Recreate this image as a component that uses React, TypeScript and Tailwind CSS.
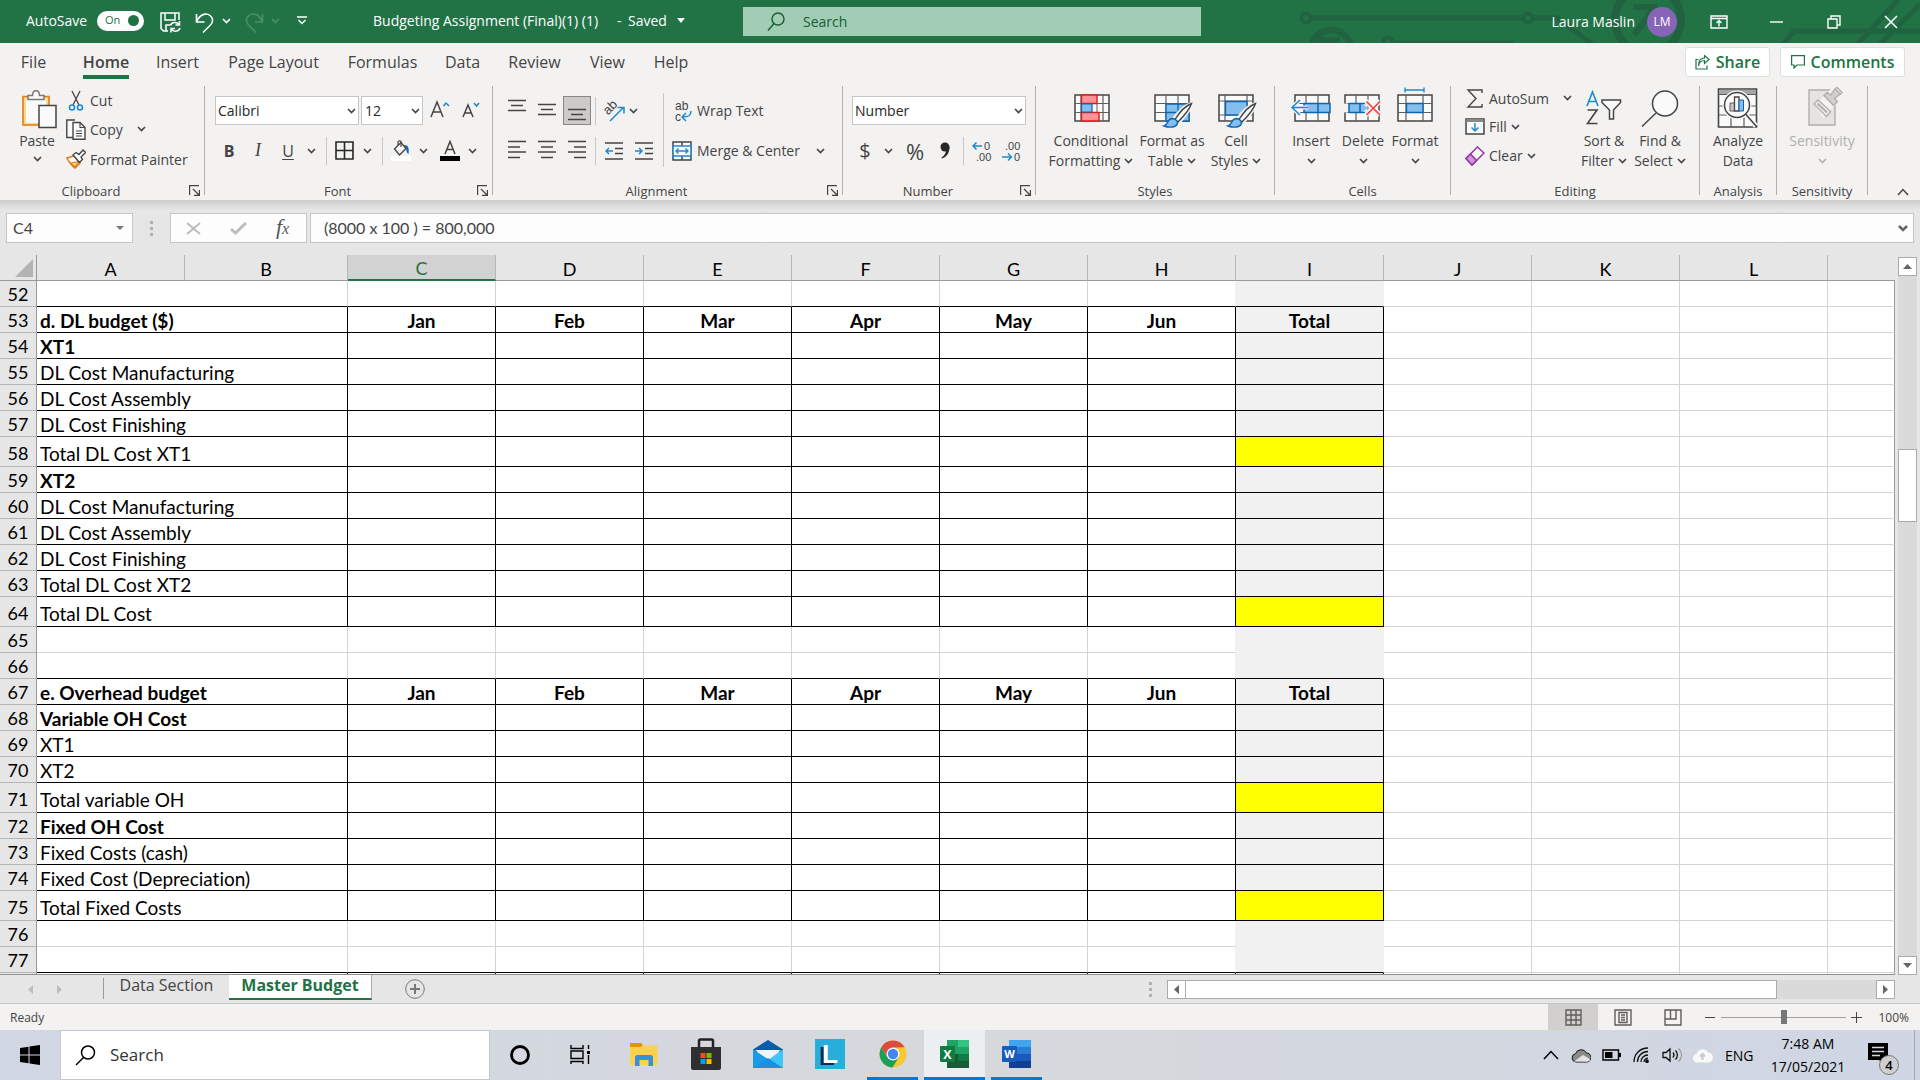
import React from "react";

type Kids = { children?: React.ReactNode };

const INK = "#444444";
const BLUE = "#1e8bcd";

function Chevron({ color = INK, className = "" }: { color?: string; className?: string }) {
  return (
    <svg width="9" height="6" viewBox="0 0 9 6" fill="none" stroke={color} strokeWidth="1.6" className={"shrink-0 " + className}>
      <path d="M1 1l3.5 3.5L8 1" />
    </svg>
  );
}

function Slot({ w, label, children }: Kids & { w: string; label: string }) {
  return (
    <button aria-label={label} className={"flex h-[29px] shrink-0 items-center justify-center " + w}>
      {children}
    </button>
  );
}

function Rule({ w }: { w: string }) {
  return (
    <div className={"flex h-[29px] shrink-0 items-center justify-center " + w}>
      <div className="h-7 w-px bg-[#c8c6c4]" />
    </div>
  );
}

function Group({ name, w, launcher, children }: Kids & { name: string; w: string; launcher?: boolean }) {
  return (
    <>
      <section aria-label={name} className={"flex h-[114px] shrink-0 flex-col " + w}>
        <div className="flex h-[94px] shrink-0">{children}</div>
        <div className="flex h-5 items-center pt-px">
          <span className="flex-1 text-center text-[13px] leading-5">{name}</span>
          {launcher && (
            <button aria-label={name + " settings"} className="flex w-[22px] shrink-0 justify-end pr-1">
              <svg width="11" height="11" viewBox="0 0 11 11" fill="none" stroke={INK} strokeWidth="1.2">
                <path d="M.6 10V.6H10M4 4l6 6M10.4 5v5.4H5" />
              </svg>
            </button>
          )}
        </div>
      </section>
      <div className="h-[109px] w-px shrink-0 bg-[#b3b0ad]" />
    </>
  );
}

function Big({ w, l1, l2, icon, muted }: { w: string; l1: string; l2?: React.ReactNode; icon: React.ReactNode; muted?: boolean }) {
  return (
    <button className={"flex shrink-0 flex-col items-center text-[14px] leading-5 " + w + (muted ? " text-[#b1afad]" : "")}>
      <span className="flex h-[45px] items-start">{icon}</span>
      <span className="whitespace-nowrap">{l1}</span>
      <span className="flex h-5 items-center gap-1 whitespace-nowrap">{l2}</span>
    </button>
  );
}

function Lines({ rows }: { rows: [number, number, number][] }) {
  return (
    <svg width="18" height="29" viewBox="0 0 18 29" stroke={INK} strokeWidth="1.5">
      {rows.map(([a, b, y]) => (
        <path key={y} d={`M${a} ${y}H${b}`} />
      ))}
    </svg>
  );
}

/* ---------- ribbon drawings ---------- */

const PasteIcon = () => (
  <svg width="36" height="44" viewBox="0 0 36 44" fill="none">
    <path d="M2 10.5h26V39H2z" fill="#f9d98f" stroke="#e07b18" strokeWidth="1.6" />
    <path d="M5 13h20v24H5z" fill="#fafafa" />
    <path d="M7 13.5V9.500h4.500c0-6.500 7-6.500 7 0H23v4z" fill="#fafafa" stroke="#7a7876" strokeWidth="1.5" />
    <path d="M18 19.500h17v22H18z" fill="#fafafa" stroke={INK} strokeWidth="1.5" />
  </svg>
);

const GridBase = ({ cols = [12, 24] }: { cols?: number[] }) => (
  <>
    <path d="M1 9h34v26H1z" fill="#fafafa" stroke={INK} strokeWidth="1.5" />
    <path d="M1 17.500h34M1 26.500h34" stroke="#605e5c" strokeWidth="1.2" />
    {cols.map((c) => (
      <path key={c} d={`M${c} 9v26`} stroke="#605e5c" strokeWidth="1.2" />
    ))}
  </>
);

const Brush = () => (
  <>
    <path d="M37 18c-8 3-13 9-17 15l4 4c5-6 11-11 13-19z" fill="#fafafa" stroke="#f3f2f1" strokeWidth="4" />
    <path d="M37.500 17.500C31 20 25 27 21 33.500l3 2.500c5-5 11-11 13.500-18.500z" fill="#fafafa" stroke={INK} strokeWidth="1.4" />
    <path d="M10 40c4-1 3-7 8-7.500 4 0 6.500 3.500 5 6-2.500 3.500-9 3-13 1.500z" fill="#83beec" stroke="#0f64b0" strokeWidth="1.4" />
  </>
);

const ConditionalIcon = () => (
  <svg width="36" height="44" viewBox="0 0 36 44" fill="none" className="ml-[2px]">
    <GridBase cols={[7, 29]} />
    <path d="M23 17v9" stroke="#605e5c" />
    <path d="M7.500 9H23v8.500H7.500zM7.500 26.500H25V35H7.500z" fill="#ff9295" stroke="#d8201c" strokeWidth="1.4" />
    <path d="M7.500 18H18v8H7.500z" fill="#83beec" stroke="#0f64b0" strokeWidth="1.2" />
  </svg>
);

const TableIcon = () => (
  <svg width="40" height="44" viewBox="0 0 40 44" fill="none" className="ml-1">
    <GridBase />
    <path d="M12 18h23v17H12z" fill="#83beec" stroke="#0f64b0" strokeWidth="1.3" />
    <path d="M12 26.500h23M24 18v17" stroke="#0f64b0" strokeWidth="1.3" />
    <Brush />
  </svg>
);

const StylesIcon = () => (
  <svg width="40" height="44" viewBox="0 0 40 44" fill="none" className="ml-1">
    <path d="M1 9h34v26H1z" fill="#fafafa" stroke={INK} strokeWidth="1.500" />
    <path d="M1 15h34M1 29h34M7 9v26M29 9v26" stroke="#605e5c" strokeWidth="1.2" />
    <path d="M7.500 15.500H29V29H7.500z" fill="#83beec" stroke="#0f64b0" strokeWidth="1.3" />
    <Brush />
  </svg>
);

const InsertIcon = () => (
  <svg width="42" height="44" viewBox="0 0 42 44" fill="none">
    <g transform="translate(4)"><GridBase /></g>
    <path d="M14 17.500h26v9H14z" fill="#83beec" stroke="#0f64b0" strokeWidth="1.5" />
    <path d="M28 17.500v9" stroke="#0f64b0" strokeWidth="1.5" />
    <path d="M18 21.500H2M10 14l-8 7.500 8 7.500" stroke="#f3f2f1" strokeWidth="4" />
    <path d="M18 21.500H2M10 14l-8 7.500 8 7.500" stroke={BLUE} strokeWidth="1.5" />
  </svg>
);

const DeleteIcon = () => (
  <svg width="40" height="44" viewBox="0 0 40 44" fill="none">
    <g transform="translate(1)"><GridBase /></g>
    <path d="M0 17.500h7v9H0z" fill="#f3f2f1" />
    <path d="M6 17.500h13l6 4.500-6 4.500H6z" fill="#83beec" />
    <path d="M24 26.500H6v-9h18M17 17.500v9" stroke="#0f64b0" strokeWidth="1.5" />
    <path d="M23 15l14 14M37 15L23 29" stroke="#f3f2f1" strokeWidth="5" />
    <path d="M26 17h8v10h-8z" fill="#f3f2f1" />
    <path d="M23.500 15.500l13.500 13.500M37 15.500L23.500 29" stroke="#f2403b" strokeWidth="1.6" />
  </svg>
);

const FormatIcon = () => (
  <svg width="38" height="44" viewBox="0 0 38 44" fill="none">
    <g transform="translate(1)"><GridBase cols={[9, 26]} /></g>
    <path d="M10.500 17.500H27v9H10.500z" fill="#83beec" stroke="#0f64b0" strokeWidth="1.4" />
    <path d="M9 4h19M9 1.500v5M28 1.500v5" stroke={BLUE} strokeWidth="1.4" />
  </svg>
);

const SortIcon = () => (
  <svg width="36" height="44" viewBox="0 0 36 44" fill="none">
    <path d="M1 20L6.500 6 12 20M3 15.500h7" stroke={BLUE} strokeWidth="1.6" />
    <path d="M1.500 24H11L1.500 37.500h10" stroke={INK} strokeWidth="1.6" />
    <path d="M16 14h18.500v2.500L27.500 24v9h-4v-9L16 16.500z" fill="#fafafa" stroke={INK} strokeWidth="1.5" />
  </svg>
);

const FindIcon = () => (
  <svg width="38" height="44" viewBox="0 0 38 44" fill="none" stroke={INK} strokeWidth="1.5">
    <circle cx="24" cy="17.500" r="12.500" fill="#fafafa" />
    <path d="M15 27L1 40.500" />
  </svg>
);

const AnalyzeIcon = () => (
  <svg width="42" height="44" viewBox="0 0 42 44" fill="none">
    <path d="M1.500 3h38v38h-38z" fill="#fafafa" stroke={INK} strokeWidth="1.6" />
    <path d="M2 4h37v4H2z" fill="#a8a6a4" />
    <path d="M1.500 8.500h38M1.500 20h38M1.500 29h38M14 29v12M27 29v12" stroke="#605e5c" strokeWidth="1.2" />
    <path d="M28 28l11 12" stroke="#fafafa" strokeWidth="5" />
    <circle cx="20" cy="19" r="14.500" fill="#fafafa" />
    <circle cx="20" cy="19" r="12.500" fill="#fafafa" stroke={INK} strokeWidth="1.5" />
    <path d="M28.500 28l11 12.500" stroke={INK} strokeWidth="1.5" />
    <path d="M13 17h4.500v8H13z" fill="#c8c6c4" stroke="#605e5c" />
    <path d="M17.500 11H22v14h-4.500z" fill="#fafafa" stroke={INK} strokeWidth="1.3" />
    <path d="M22 14h4.500v11H22z" fill="#83beec" stroke="#0f64b0" />
  </svg>
);

const SensitivityIcon = () => (
  <svg width="36" height="44" viewBox="0 0 36 44" fill="none" stroke="#b1afad" strokeWidth="1.400" className="ml-[6px]">
    <path d="M2 4h26v35H2z" fill="#e6e4e2" />
    <path d="M8 19L26 1l10 10-20 21z" fill="#f3f2f1" stroke="none" />
    <path d="M7 18l4-4 12.500 11.500-4 5z" fill="#f3f2f1" />
    <path d="M10.500 17.500L20 26.500" strokeWidth="2.200" />
    <path d="M17 9.500l3.500-3 3 2.500L28 3l5.500 5-6 4.500 3 3-4 4z" fill="#d2d0ce" />
    <path d="M28 3l2-1.500 5 5L33.500 8" />
  </svg>
);

/* ---------- title bar ---------- */

function TitleBar() {
  return (
    <header className="relative flex h-[43px] shrink-0 items-center overflow-hidden bg-[#217346] text-[14px] text-white">
      <svg className="absolute right-0 top-0" width="620" height="43" viewBox="1300 0 620 43" fill="none" stroke="#216340" strokeWidth="5" aria-hidden="true">
        <circle cx="1306" cy="18" r="4.500" strokeWidth="4" />
        <path d="M1311 18h212M1533 18h24l38 28" />
        <circle cx="1528" cy="18" r="4.500" strokeWidth="4" />
        <circle cx="1331" cy="50" r="20" strokeWidth="7" />
        <path d="M1318 41h22" strokeWidth="7" />
        <circle cx="1388" cy="42" r="4.500" strokeWidth="4" />
        <path d="M1393 43h120" />
        <circle cx="1648" cy="20" r="33" strokeWidth="8" />
        <path d="M1633 7h22v22M1655 7l-21 28" strokeWidth="6" />
        <path d="M1782 46l12-15h126M1856 46l42-46M1878 46l42-42" />
      </svg>
      <div className="relative flex w-[743px] shrink-0 items-center pb-[2px]">
        <label className="ml-[26px] flex items-center gap-2">
          <span className="w-[63px] whitespace-nowrap">AutoSave</span>
          <input type="checkbox" defaultChecked className="sr-only" />
          <span className="flex h-5 w-[47px] items-center justify-between rounded-full bg-white pl-2 pr-[5px] text-[11px] text-[#217346]">
            On<span className="size-[11px] rounded-full bg-[#217346]" />
          </span>
        </label>
        <button aria-label="Save" className="ml-4 pt-1">
          <svg width="21" height="21" viewBox="0 0 21 21" fill="none" stroke="white" strokeWidth="1.500">
            <path d="M8 19H3.500L1 16.500V1h18v7M5 1v7h10V1M6 19v-6h4" />
            <path d="M10.500 13.500c1-3.500 6.500-4 8.500-1M19.500 9v4h-4M20 16c-1 3.500-6.500 4.500-8.500 1M11 20.500v-4h4" />
          </svg>
        </button>
        <button aria-label="Undo" className="ml-[14px] pt-1">
          <svg width="20" height="22" viewBox="0 0 20 22" fill="none" stroke="white" strokeWidth="1.600">
            <path d="M1.500 2v8h8M1.500 9.500C6 1 12 1 15 3.500c3.500 3 3.500 6.500 0 10L8 20.500" />
          </svg>
        </button>
        <Chevron color="white" className="ml-[7px]" />
        <button aria-label="Redo" className="ml-[13px] pt-1">
          <svg width="20" height="22" viewBox="0 0 20 22" fill="none" stroke="#4c9069" strokeWidth="1.600">
            <path d="M18.500 2v8h-8M18.500 9.500C14 1 8 1 5 3.500c-3.500 3-3.500 6.500 0 10l7 7" />
          </svg>
        </button>
        <Chevron color="#4c9069" className="ml-[7px]" />
        <button aria-label="Customize toolbar" className="ml-[17px]">
          <svg width="10" height="9" viewBox="0 0 10 9" fill="none" stroke="white" strokeWidth="1.400">
            <path d="M0 1h10M1.500 4L5 7.500 8.500 4" />
          </svg>
        </button>
        <button className="ml-[66px] flex items-center whitespace-nowrap">
          <span className="w-[244px] text-left">Budgeting Assignment (Final)(1) (1)</span>
          <span className="w-[11px] text-left">-</span>
          <span className="w-[49px] text-left">Saved</span>
          <svg width="8" height="5" viewBox="0 0 8 5" fill="white"><path d="M0 0h8L4 5z" /></svg>
        </button>
      </div>
      <label className="relative flex h-[29px] w-[458px] shrink-0 items-center bg-[#a0cdb4] pl-6 text-[#185c37]">
        <svg width="18" height="20" viewBox="0 0 18 20" fill="none" stroke="#185c37" strokeWidth="1.400">
          <circle cx="11" cy="7" r="6" /><path d="M7 11.500L1 18.500" />
        </svg>
        <input aria-label="Search" placeholder="Search" className="ml-[18px] min-w-0 flex-1 bg-transparent outline-none placeholder:text-[#185c37]" />
      </label>
      <div className="relative flex flex-1 items-center justify-end">
        <span>Laura Maslin</span>
        <span className="ml-3 flex size-[30px] items-center justify-center rounded-full bg-[#8764b8] text-[12px]">LM</span>
        <button aria-label="Ribbon display options" className="ml-[33px]">
          <svg width="18" height="14" viewBox="0 0 18 14" fill="none" stroke="white" strokeWidth="1.400">
            <path d="M1 1h16v12H1zM1 3.500h16M9 11.500V6M6.500 8L9 5.500 11.500 8" />
          </svg>
        </button>
        <button aria-label="Minimize" className="ml-[42px]">
          <svg width="13" height="14" viewBox="0 0 13 14" stroke="white" strokeWidth="1.400"><path d="M0 7h13" /></svg>
        </button>
        <button aria-label="Restore" className="ml-11">
          <svg width="14" height="14" viewBox="0 0 14 14" fill="none" stroke="white" strokeWidth="1.400">
            <path d="M1 4h9v9H1zM4 4V1h9v9h-3" />
          </svg>
        </button>
        <button aria-label="Close" className="ml-[43px] mr-[22px]">
          <svg width="14" height="14" viewBox="0 0 14 14" stroke="white" strokeWidth="1.500"><path d="M1 1l12 12M13 1L1 13" /></svg>
        </button>
      </div>
    </header>
  );
}

const TABS: [string, string][] = [
  ["File", "w-[61px] mr-[6px]"],
  ["Home", "w-[72px]"],
  ["Insert", "w-[71px]"],
  ["Page Layout", "w-[121px]"],
  ["Formulas", "w-[97px]"],
  ["Data", "w-[63px]"],
  ["Review", "w-[81px]"],
  ["View", "w-[65px]"],
  ["Help", "w-[62px]"],
];

function TabRow() {
  return (
    <nav className="flex h-[43px] shrink-0 items-start pl-[3px] text-[16px]">
      {TABS.map(([t, w]) => (
        <button key={t} className={"flex shrink-0 flex-col items-center whitespace-nowrap pt-[7px] leading-6 " + w}>
          {t === "Home" ? <span className="border-b-4 border-[#217346] pb-px font-semibold">{t}</span> : <span>{t}</span>}
        </button>
      ))}
      <div className="mt-1 flex flex-1 justify-end gap-[10px] pr-[15px] font-semibold text-[#217346]">
        <button className="flex h-[30px] w-[85px] items-center justify-center gap-[6px] rounded-[3px] border border-[#e1dfdd] bg-white">
          <svg width="15" height="15" viewBox="0 0 15 15" fill="none" stroke="#217346" strokeWidth="1.200">
            <path d="M3.500 4.500H1v9.500h11v-3.500M3.500 11C4 7 6.500 5.500 9.500 5.500V8.500l4.500-4-4.500-4v2.500C5.500 3 3.500 6 3.500 11z" />
          </svg>
          Share
        </button>
        <button className="flex h-[30px] w-[125px] items-center justify-center gap-[6px] rounded-[3px] border border-[#e1dfdd] bg-white">
          <svg width="14" height="14" viewBox="0 0 14 14" fill="none" stroke="#217346" strokeWidth="1.200">
            <path d="M.6.600h12.800v9.400H6l-3 3v-3H.600z" />
          </svg>
          Comments
        </button>
      </div>
    </nav>
  );
}

/* ---------- ribbon ---------- */

function Ribbon() {
  return (
    <div className="flex shrink-0">
      <Group name="Clipboard" w="w-[204px]" launcher>
        <button className="ml-[14px] flex w-[46px] shrink-0 flex-col items-center text-[14px] leading-5">
          <span className="flex h-[45px] pl-1"><PasteIcon /></span>
          <span>Paste</span>
          <Chevron className="mt-[5px]" />
        </button>
        <div className="ml-[6px] flex flex-col text-[14px]">
          <button className="flex h-[28px] items-center gap-1">
            <svg width="20" height="21" viewBox="0 0 20 21" fill="none">
              <path d="M6 1l7 14M14 1L7 15" stroke={INK} strokeWidth="1.300" />
              <circle cx="6" cy="17.500" r="2.500" stroke={BLUE} strokeWidth="1.600" />
              <circle cx="14" cy="17.500" r="2.500" stroke={BLUE} strokeWidth="1.600" />
            </svg>
            Cut
          </button>
          <button className="flex h-[30px] items-center gap-1">
            <svg width="20" height="21" viewBox="0 0 20 21" fill="none" stroke={INK} strokeWidth="1.400">
              <path d="M7 18.500H.800V1H9M7 3.500h7l5 5v11.700H7z" fill="#fafafa" />
              <path d="M14 3.500v5h5M10 12h6M10 14.500h6M10 17h6" strokeWidth="1.100" />
            </svg>
            Copy
            <Chevron className="ml-[10px]" />
          </button>
          <button className="flex h-[30px] items-center gap-1 whitespace-nowrap">
            <svg width="20" height="20" viewBox="0 0 20 20" fill="none">
              <path d="M1 9l7-2 6 7-5 5C6 17 3 13 1 9z" fill="#fff" stroke="#e07b18" strokeWidth="1.600" />
              <path d="M4.500 14l8-1.500L9 18z" fill="#f9d98f" stroke="#e07b18" strokeWidth="1.200" />
              <path d="M7 6l3-2.500 3 2L17 1l2.500 2.500L15 8l1.500 2.500-3 3z" fill="#fafafa" stroke={INK} strokeWidth="1.400" />
            </svg>
            Format Painter
          </button>
        </div>
      </Group>

      <Group name="Font" w="w-[287px]" launcher>
        <div className="ml-[10px] flex flex-col gap-[11px] pt-[10px]">
          <div className="flex">
            <div className="relative mr-[2px] w-[144px]">
              <select aria-label="Font name" className="h-[29px] w-full appearance-none border border-[#c8c6c4] bg-white px-[2px] text-[14px] text-[#262626]">
                <option>Calibri</option>
              </select>
              <Chevron className="pointer-events-none absolute right-[3px] top-3" />
            </div>
            <div className="relative w-[62px]">
              <select aria-label="Font size" className="h-[29px] w-full appearance-none border border-[#c8c6c4] bg-white px-[3px] text-[14px] text-[#262626]">
                <option>12</option>
              </select>
              <Chevron className="pointer-events-none absolute right-[3px] top-3" />
            </div>
            <Slot w="w-[34px]" label="Increase font size">
              <svg width="20" height="22" viewBox="0 0 20 22" fill="none" stroke={INK} strokeWidth="1.500">
                <path d="M1 17L7 2l6 15M3 12h8" /><path d="M13.500 6L16 3l3 3" stroke={BLUE} />
              </svg>
            </Slot>
            <Slot w="w-[28px]" label="Decrease font size">
              <svg width="18" height="22" viewBox="0 0 18 22" fill="none" stroke={INK} strokeWidth="1.500">
                <path d="M1 17L6 5l5 12M3 13h6" /><path d="M12 3l2.500 3L17 3" stroke={BLUE} />
              </svg>
            </Slot>
          </div>
          <div className="flex text-[16px]">
            <Slot w="w-[28px]" label="Bold"><span className="font-bold">B</span></Slot>
            <Slot w="w-[30px]" label="Italic"><span className="font-['Liberation_Serif'] text-[18px] italic">I</span></Slot>
            <Slot w="w-[30px]" label="Underline"><span className="underline underline-offset-2">U</span></Slot>
            <Slot w="w-[16px]" label="Underline options"><Chevron /></Slot>
            <Rule w="w-[14px]" />
            <Slot w="w-[22px]" label="Borders">
              <svg width="19" height="19" viewBox="0 0 19 19" fill="none" stroke="#262626" strokeWidth="1.600"><path d="M1 1h17v17H1zM9.500 1v17M1 9.500h17" /></svg>
            </Slot>
            <Slot w="w-[24px]" label="Border options"><Chevron /></Slot>
            <Rule w="w-[6px]" />
            <Slot w="w-[32px]" label="Fill colour">
              <svg width="20" height="21" viewBox="0 0 20 21" fill="none">
                <path d="M3.500 9L10 2.500l5 6L8.500 15z" fill="#fafafa" stroke={INK} strokeWidth="1.400" />
                <path d="M10 7V1.500C10 .5 7 .5 7 2v3" stroke={INK} strokeWidth="1.200" />
                <path d="M13 5c4-.5 5.500 3 4.500 9-2-1-2-4-2.500-6z" fill="#0f64b0" />
                <path d="M0 16h20v5H0z" fill="#fff" />
              </svg>
            </Slot>
            <Slot w="w-[12px]" label="Fill options"><Chevron /></Slot>
            <Slot w="w-[34px] ml-1" label="Font colour">
              <svg width="20" height="21" viewBox="0 0 20 21" fill="none">
                <path d="M5 14l5-12.500L15 14M7 9.500h6" stroke={INK} strokeWidth="1.500" /><path d="M0 16h20v5H0z" fill="#000" />
              </svg>
            </Slot>
            <Slot w="w-[10px]" label="Font colour options"><Chevron /></Slot>
          </div>
        </div>
      </Group>

      <Group name="Alignment" w="w-[349px]" launcher>
        <div className="flex w-[170px] shrink-0 flex-col gap-[11px] pl-[9px] pt-[10px]">
          <div className="flex">
            <Slot w="w-[30px]" label="Top align"><Lines rows={[[0, 18, 4.5], [3, 15, 9.5], [0, 18, 14.5]]} /></Slot>
            <Slot w="w-[30px]" label="Middle align"><Lines rows={[[0, 18, 8.5], [3, 15, 13.5], [0, 18, 18.5]]} /></Slot>
            <Slot w="w-[28px] ml-px border border-[#8a8886] bg-[#cdcbc9]" label="Bottom align"><Lines rows={[[0, 18, 13.5], [3, 15, 18.5], [0, 18, 23.5]]} /></Slot>
            <Rule w="w-[8px]" />
            <Slot w="w-[30px]" label="Orientation">
              <svg width="28" height="28" viewBox="0 0 28 28" fill="none">
                <text x="7" y="18" fontSize="13" fontFamily="Liberation Sans" fill={INK} transform="rotate(-45 8 17)">ab</text>
                <path d="M10 24L23 11M17.500 10.500H24v6" stroke={BLUE} strokeWidth="1.500" />
              </svg>
            </Slot>
            <Slot w="w-[9px]" label="Orientation options"><Chevron /></Slot>
          </div>
          <div className="flex">
            <Slot w="w-[30px]" label="Align left"><Lines rows={[[0, 18, 5.5], [0, 12, 11], [0, 18, 16], [0, 12, 21.5]]} /></Slot>
            <Slot w="w-[30px]" label="Centre"><Lines rows={[[0, 18, 5.5], [3, 15, 11], [0, 18, 16], [3, 15, 21.5]]} /></Slot>
            <Slot w="w-[30px]" label="Align right"><Lines rows={[[0, 18, 5.5], [6, 18, 11], [0, 18, 16], [6, 18, 21.5]]} /></Slot>
            <Rule w="w-[6px]" />
            <Slot w="w-[32px]" label="Decrease indent">
              <svg width="18" height="18" viewBox="0 0 18 18" fill="none" stroke={INK} strokeWidth="1.500">
                <path d="M0 1h18M10 6.500h8M10 11.500h8M0 17h18" /><path d="M8 9H1M4 6L1 9l3 3" stroke={BLUE} />
              </svg>
            </Slot>
            <Slot w="w-[28px]" label="Increase indent">
              <svg width="18" height="18" viewBox="0 0 18 18" fill="none" stroke={INK} strokeWidth="1.500">
                <path d="M0 1h18M10 6.500h8M10 11.500h8M0 17h18" /><path d="M0 9h7M4 6l3 3-3 3" stroke={BLUE} />
              </svg>
            </Slot>
          </div>
        </div>
        <div className="mt-[7px] h-[74px] w-px shrink-0 bg-[#c8c6c4]" />
        <div className="flex flex-col gap-[11px] pl-2 pt-[10px] text-[14px]">
          <button className="flex h-[29px] items-center gap-[5px] whitespace-nowrap">
            <svg width="20" height="26" viewBox="0 0 20 26" fill="none">
              <text x="3" y="12" fontSize="12" fontFamily="Liberation Sans" fill={INK}>ab</text>
              <text x="3" y="23" fontSize="12" fontFamily="Liberation Sans" fill={INK} className="leading-none">c</text>
              <path d="M19 13c0 5-3 6-8 6M14 15l-4 4 4 4" stroke={BLUE} strokeWidth="1.500" />
            </svg>
            Wrap Text
          </button>
          <button className="flex h-[29px] items-center gap-[5px] whitespace-nowrap">
            <svg width="20" height="20" viewBox="0 0 20 20" fill="none">
              <path d="M1 1h18v18H1zM10 1v18" fill="#fafafa" stroke={INK} strokeWidth="1.500" />
              <path d="M1 5h18v10H1z" fill="#fafafa" stroke={BLUE} strokeWidth="1.600" />
              <path d="M4 10h12M6.500 7.500L4 10l2.500 2.500M13.500 7.500L16 10l-2.500 2.500" stroke={BLUE} strokeWidth="1.400" />
            </svg>
            <span className="w-[114px] text-left">Merge &amp; Center</span>
            <Chevron />
          </button>
        </div>
      </Group>

      <Group name="Number" w="w-[192px]" launcher>
        <div className="ml-[9px] flex flex-col gap-[11px] pt-[10px]">
          <div className="relative w-[174px]">
            <select aria-label="Number format" className="h-[29px] w-full appearance-none border border-[#c8c6c4] bg-white px-[2px] text-[14px] text-[#262626]">
              <option>Number</option>
            </select>
            <Chevron className="pointer-events-none absolute right-[3px] top-3" />
          </div>
          <div className="flex">
            <Slot w="w-[26px]" label="Accounting format"><span className="text-[20px] leading-5">$</span></Slot>
            <Slot w="w-[20px]" label="Accounting options"><Chevron /></Slot>
            <Slot w="w-[34px]" label="Percent"><span className="text-[22px] leading-5">%</span></Slot>
            <Slot w="w-[26px]" label="Comma">
              <svg width="10" height="17" viewBox="0 0 10 17" fill="#262626"><circle cx="5" cy="5" r="4.500" /><path d="M9.500 5c0 6-3 10-7.500 11.500l-.5-1C4.500 14 6 11 6 8z" /></svg>
            </Slot>
            <Rule w="w-[10px]" />
            <Slot w="w-[28px]" label="Increase decimal">
              <svg width="22" height="26" viewBox="0 0 22 26" fill="none" fontFamily="Liberation Sans" fontSize="11">
                <text x="13" y="12" fill={INK}>0</text><text x="5" y="23" fill={INK}>.00</text>
                <path d="M11 8H2M5.500 4.500L2 8l3.500 3.500" stroke={BLUE} strokeWidth="1.500" />
              </svg>
            </Slot>
            <Slot w="w-[30px]" label="Decrease decimal">
              <svg width="22" height="26" viewBox="0 0 22 26" fill="none" fontFamily="Liberation Sans" fontSize="11">
                <text x="5" y="12" fill={INK}>.00</text><text x="14" y="23" fill={INK}>0</text>
                <path d="M2 19h9M8 15.500l3.500 3.500L8 22.500" stroke={BLUE} strokeWidth="1.500" />
              </svg>
            </Slot>
          </div>
        </div>
      </Group>

      <Group name="Styles" w="w-[238px]">
        <div className="ml-3 flex">
          <Big w="w-[86px]" l1="Conditional" l2={<>Formatting <Chevron /></>} icon={<ConditionalIcon />} />
          <Big w="w-[76px]" l1="Format as" l2={<>Table <Chevron /></>} icon={<TableIcon />} />
          <Big w="w-[52px]" l1="Cell" l2={<>Styles <Chevron /></>} icon={<StylesIcon />} />
        </div>
      </Group>

      <Group name="Cells" w="w-[175px]">
        <div className="ml-[10px] flex">
          <Big w="w-[52px]" l1="Insert" l2={<Chevron />} icon={<InsertIcon />} />
          <Big w="w-[52px]" l1="Delete" l2={<Chevron />} icon={<DeleteIcon />} />
          <Big w="w-[52px]" l1="Format" l2={<Chevron />} icon={<FormatIcon />} />
        </div>
      </Group>

      <Group name="Editing" w="w-[248px]">
        <div className="ml-[14px] flex w-[110px] shrink-0 flex-col text-[14px]">
          <button className="flex h-6 items-center gap-1">
            <svg width="20" height="19" viewBox="0 0 20 19" fill="none" stroke={INK} strokeWidth="1.400">
              <path d="M17 4V1H3l8 8.500L3 18h14v-3" />
            </svg>
            <span className="w-[70px] text-left">AutoSum</span>
            <Chevron />
          </button>
          <button className="mt-[2px] flex h-[29px] items-center gap-1">
            <svg width="20" height="19" viewBox="0 0 20 19" fill="none">
              <path d="M1 2h18v15H1z" fill="#fafafa" stroke={INK} strokeWidth="1.500" /><path d="M1.500 2h17v3h-17z" fill="#8a8886" />
              <path d="M10 6v8M6.500 10.500L10 14l3.500-3.500" stroke={BLUE} strokeWidth="1.500" />
            </svg>
            Fill <Chevron />
          </button>
          <button className="flex h-[29px] items-center gap-1">
            <svg width="20" height="20" viewBox="0 0 20 20" fill="none" stroke="#9332a3" strokeWidth="1.500">
              <path d="M12.500 1L19 7 7 19 1 12.500z" fill="#fafafa" /><path d="M5.500 8l6 6.500L7 19 1 12.500z" fill="#d593dd" />
            </svg>
            Clear <Chevron />
          </button>
        </div>
        <Big w="w-[58px]" l1="Sort &" l2={<>Filter <Chevron /></>} icon={<SortIcon />} />
        <Big w="w-[54px]" l1="Find &" l2={<>Select <Chevron /></>} icon={<FindIcon />} />
      </Group>

      <Group name="Analysis" w="w-[76px]">
        <Big w="w-full" l1="Analyze" l2="Data" icon={<AnalyzeIcon />} />
      </Group>

      <Group name="Sensitivity" w="w-[90px]">
        <Big w="w-full" l1="Sensitivity" l2={<Chevron color="#b1afad" />} icon={<SensitivityIcon />} muted />
      </Group>

      <div className="flex flex-1 items-end justify-end pb-1 pr-[11px]">
        <button aria-label="Collapse ribbon">
          <svg width="12" height="8" viewBox="0 0 12 8" fill="none" stroke={INK} strokeWidth="1.500"><path d="M1 7l5-5.500L11 7" /></svg>
        </button>
      </div>
    </div>
  );
}

/* ---------- formula bar ---------- */

const Dots = () => (
  <span className="flex flex-col gap-[3px]">
    <span className="size-[3px] bg-[#b1b1b1]" />
    <span className="size-[3px] bg-[#b1b1b1]" />
    <span className="size-[3px] bg-[#b1b1b1]" />
  </span>
);

function FormulaBar() {
  return (
    <div className="flex h-[55px] shrink-0 items-start bg-linear-to-b from-[#cdcdcd] from-0% to-[#e6e6e6] to-[18%] pl-[6px] pr-[6px] pt-[13px] font-['Lato',sans-serif] text-[16px] text-[#444]">
      <div className="flex h-[30px] w-[127px] shrink-0 items-center border border-[#c6c6c6] bg-[#fdfdfd] pr-2">
        <input aria-label="Name box" defaultValue="C4" className="min-w-0 flex-1 bg-transparent pl-[6px] outline-none" />
        <svg width="8" height="4" viewBox="0 0 8 4" fill="#777"><path d="M0 0h8L4 4z" /></svg>
      </div>
      <div className="flex h-[30px] w-[37px] shrink-0 items-center justify-center"><Dots /></div>
      <div className="flex h-[30px] w-[137px] shrink-0 items-center border border-[#c6c6c6] bg-[#fdfdfd]">
        <button aria-label="Cancel" className="flex w-[44px] justify-center">
          <svg width="15" height="13" viewBox="0 0 15 13" stroke="#bdbdbd" strokeWidth="2"><path d="M1 1l13 11M14 1L1 12" /></svg>
        </button>
        <button aria-label="Enter" className="flex w-[46px] justify-center">
          <svg width="17" height="13" viewBox="0 0 17 13" fill="none" stroke="#bdbdbd" strokeWidth="3"><path d="M1 7l4.500 4L16 1" /></svg>
        </button>
        <button aria-label="Insert function" className="flex w-[43px] items-baseline justify-center font-['Liberation_Serif',serif] italic leading-6 text-[#555]">
          <span className="text-[22px]">f</span><span className="text-[16px]">x</span>
        </button>
      </div>
      <div className="ml-[3px] flex h-[30px] flex-1 items-center border border-[#c6c6c6] bg-[#fdfdfd] pr-[5px]">
        <input aria-label="Formula" defaultValue="(8000 x 100 ) = 800,000" className="min-w-0 flex-1 bg-transparent pl-[13px] outline-none" />
        <svg width="10" height="7" viewBox="0 0 10 7" fill="none" stroke="#666" strokeWidth="2.500"><path d="M1 1l4 4 4-4" /></svg>
      </div>
    </div>
  );
}

/* ---------- worksheet ---------- */

type Row = { n: number; t?: string; kind: "blank" | "head" | "bold" | "item" | "total"; last?: boolean };

const ROWS: Row[] = [
  { n: 52, kind: "blank", last: true },
  { n: 53, kind: "head", t: "d. DL budget ($)" },
  { n: 54, kind: "bold", t: "XT1" },
  { n: 55, kind: "item", t: "DL Cost Manufacturing" },
  { n: 56, kind: "item", t: "DL Cost Assembly" },
  { n: 57, kind: "item", t: "DL Cost Finishing" },
  { n: 58, kind: "total", t: "Total DL Cost XT1" },
  { n: 59, kind: "bold", t: "XT2" },
  { n: 60, kind: "item", t: "DL Cost Manufacturing" },
  { n: 61, kind: "item", t: "DL Cost Assembly" },
  { n: 62, kind: "item", t: "DL Cost Finishing" },
  { n: 63, kind: "item", t: "Total DL Cost XT2" },
  { n: 64, kind: "total", t: "Total DL Cost" },
  { n: 65, kind: "blank" },
  { n: 66, kind: "blank", last: true },
  { n: 67, kind: "head", t: "e. Overhead budget" },
  { n: 68, kind: "bold", t: "Variable OH Cost" },
  { n: 69, kind: "item", t: "XT1" },
  { n: 70, kind: "item", t: "XT2" },
  { n: 71, kind: "total", t: "Total variable OH" },
  { n: 72, kind: "bold", t: "Fixed OH Cost" },
  { n: 73, kind: "item", t: "Fixed Costs (cash)" },
  { n: 74, kind: "item", t: "Fixed Cost (Depreciation)" },
  { n: 75, kind: "total", t: "Total Fixed Costs" },
  { n: 76, kind: "blank" },
  { n: 77, kind: "blank", last: true },
];

const MONTHS = ["Jan", "Feb", "Mar", "Apr", "May", "Jun"];
const LETTERS = ["A", "B", "C", "D", "E", "F", "G", "H", "I", "J", "K", "L"];

function SheetRow({ r }: { r: Row }) {
  const blank = r.kind === "blank";
  const line = blank ? "border-r-[#d4d4d4]" : "border-r-black";
  const under = !blank || r.last ? "border-b-black" : "border-b-[#d4d4d4]";
  const bold = r.kind === "head" || r.kind === "bold" ? " font-bold" : "";
  const pad = r.kind === "total" ? " pt-[4px]" : " pt-[2px]";
  return (
    <tr className={r.kind === "total" ? "h-[30px]" : "h-[26px]"}>
      <th scope="row" className={"border-b border-r border-b-[#b5b5b5] border-r-[#999] bg-[#e6e6e6] p-0 text-center text-[18px] font-normal leading-[23px]" + pad}>
        {r.n}
      </th>
      <td colSpan={2} className={"whitespace-nowrap border-b border-r p-0 pl-[3px] leading-[23px] " + line + " " + under + bold + pad}>
        {r.t}
      </td>
      {MONTHS.map((m, i) => (
        <td key={m} className={"border-b border-r p-0 text-center font-bold leading-[23px] " + (blank && i === 5 ? "border-r-[#f1f1f1]" : line) + " " + under + pad}>
          {r.kind === "head" ? m : null}
        </td>
      ))}
      <td
        className={
          "border-b border-r p-0 text-center font-bold leading-[23px] " +
          (r.kind === "total" ? "bg-[#ffff00] " : "bg-[#f1f1f1] ") +
          (blank ? "border-r-[#f1f1f1] " : "border-r-black ") +
          (!blank || r.last ? "border-b-black" : "border-b-[#f1f1f1]") +
          pad
        }
      >
        {r.kind === "head" ? "Total" : null}
      </td>
      <td className="border-b border-r border-[#d4d4d4] p-0" />
      <td className="border-b border-r border-[#d4d4d4] p-0" />
      <td className="border-b border-r border-[#d4d4d4] p-0" />
      <td className="border-b border-r border-b-[#d4d4d4] border-r-[#999] p-0" />
    </tr>
  );
}

function Sheet() {
  return (
    <div className="flex min-h-0 flex-1 bg-[#e6e6e6]">
      <div className="min-w-0 flex-1 overflow-hidden border-b border-[#8f8f8f]">
        <table className="w-full table-fixed border-separate border-spacing-0 bg-white font-['Lato',sans-serif] text-[19px] text-black [font-variant-ligatures:none]">
          <colgroup>
            <col className="w-[37px]" />
            <col className="w-[148px]" />
            <col className="w-[163px]" />
            {LETTERS.slice(2).map((l) => (
              <col key={l} className="w-[148px]" />
            ))}
            <col />
          </colgroup>
          <thead>
            <tr className="h-[26px] bg-[#e6e6e6] text-[18px]">
              <th aria-label="Select all" className="border-b border-r border-[#999] p-0 pr-[3px]">
                <svg width="18" height="18" viewBox="0 0 18 18" fill="#b4b4b4" className="ml-auto"><path d="M18 0v18H0z" /></svg>
              </th>
              {LETTERS.map((l) => (
                <th
                  key={l}
                  scope="col"
                  className={
                    "border-r border-r-[#b5b5b5] p-0 pt-[2px] text-center font-normal leading-[22px] " +
                    (l === "C" ? "border-b-2 border-b-[#217346] bg-[#d2d2d2] text-[#217346]" : "border-b border-b-[#999]")
                  }
                >
                  {l}
                </th>
              ))}
              <th className="border-b border-[#999] p-0" />
            </tr>
          </thead>
          <tbody>
            {ROWS.map((r) => (
              <SheetRow key={r.n} r={r} />
            ))}
            <SheetRow r={{ n: 78, kind: "item" }} />
          </tbody>
        </table>
      </div>
      <div className="mx-[3px] mt-[2px] flex w-[19px] shrink-0 flex-col bg-[#dadada]">
        <button aria-label="Scroll up" className="flex h-[19px] items-center justify-center border border-[#ababab] bg-white">
          <svg width="9" height="5" viewBox="0 0 9 5" fill="#666"><path d="M0 5h9L4.500 0z" /></svg>
        </button>
        <div className="flex-[174]" />
        <div className="flex-[71] border border-[#ababab] bg-white" />
        <div className="flex-[435]" />
        <button aria-label="Scroll down" className="flex h-[19px] items-center justify-center border border-[#ababab] bg-white">
          <svg width="9" height="5" viewBox="0 0 9 5" fill="#666"><path d="M0 0h9L4.500 5z" /></svg>
        </button>
      </div>
    </div>
  );
}

function SheetTabs() {
  return (
    <div className="flex h-[29px] shrink-0 items-start border-b border-[#c6c6c6] bg-[#e6e6e6] text-[16px]">
      <div className="flex h-7 w-[103px] shrink-0 items-center pl-7">
        <svg width="34" height="9" viewBox="0 0 34 9" fill="#bdbdbd"><path d="M5 0v9L0 4.500zM29 0v9l5-4.500z" /></svg>
      </div>
      <div className="mt-[3px] h-[21px] w-px bg-[#999]" />
      <button className="w-[125px] shrink-0 whitespace-nowrap text-center leading-5 text-[#444]">Data Section</button>
      <button className="flex h-[25px] w-[143px] shrink-0 items-start justify-center whitespace-nowrap border-b-2 border-r border-b-[#217346] border-r-[#ababab] bg-white font-bold leading-5 text-[#217346]">
        Master Budget
      </button>
      <button aria-label="New sheet" className="ml-[33px] mt-1">
        <svg width="20" height="20" viewBox="0 0 20 20" fill="none" stroke="#777">
          <circle cx="10" cy="10" r="9.300" /><path d="M10 5v10M5 10h10" strokeWidth="2" />
        </svg>
      </button>
      <div className="flex h-7 flex-1 items-center justify-end pr-[25px]">
        <Dots />
        <div className="ml-[15px] flex h-[19px] w-[728px] bg-[#dadada]">
          <button aria-label="Scroll left" className="flex w-[19px] shrink-0 items-center justify-center border border-[#ababab] bg-white">
            <svg width="5" height="9" viewBox="0 0 5 9" fill="#666"><path d="M5 0v9L0 4.500z" /></svg>
          </button>
          <div className="flex-[591] border border-l-0 border-[#ababab] bg-white" />
          <div className="flex-[99]" />
          <button aria-label="Scroll right" className="flex w-[19px] shrink-0 items-center justify-center border border-[#ababab] bg-white">
            <svg width="5" height="9" viewBox="0 0 5 9" fill="#666"><path d="M0 0v9l5-4.500z" /></svg>
          </button>
        </div>
      </div>
    </div>
  );
}

function StatusBar() {
  return (
    <div className="flex h-[26px] shrink-0 items-center bg-[#f3f2f1] text-[12px] text-[#444]">
      <span className="pl-[10px] pt-px">Ready</span>
      <div className="flex flex-1 items-center justify-end pr-[11px]">
        <button aria-label="Normal view" className="flex h-[26px] w-[50px] items-center justify-center bg-[#d2d0ce]">
          <svg width="17" height="17" viewBox="0 0 17 17" fill="none" stroke="#605e5c" strokeWidth="1.400"><path d="M1 1h15v15H1zM6 1v15M11 1v15M1 6h15M1 11h15" /></svg>
        </button>
        <button aria-label="Page layout view" className="flex w-[50px] justify-center">
          <svg width="18" height="17" viewBox="0 0 18 17" fill="none" stroke="#605e5c" strokeWidth="1.400"><path d="M1 1h16v15H1zM5 3.500h8v10H5zM7 6h4M7 8.500h4M7 11h4" /></svg>
        </button>
        <button aria-label="Page break view" className="flex w-[50px] justify-center">
          <svg width="18" height="17" viewBox="0 0 18 17" fill="none" stroke="#605e5c" strokeWidth="1.400"><path d="M1 1h16v15H1zM1 10h11V1M6.500 1v9" /></svg>
        </button>
        <button aria-label="Zoom out" className="ml-[7px] flex h-[26px] w-[12px] items-center"><span className="h-px w-[10px] bg-[#444]" /></button>
        <input
          aria-label="Zoom"
          type="range"
          className="mx-1 h-[14px] w-[125px] appearance-none bg-transparent [&::-webkit-slider-runnable-track]:h-px [&::-webkit-slider-runnable-track]:bg-[#a19f9d] [&::-webkit-slider-thumb]:-mt-[7px] [&::-webkit-slider-thumb]:h-[14px] [&::-webkit-slider-thumb]:w-[6px] [&::-webkit-slider-thumb]:appearance-none [&::-webkit-slider-thumb]:bg-[#777]"
        />
        <button aria-label="Zoom in" className="ml-px">
          <svg width="11" height="11" viewBox="0 0 11 11" stroke="#444"><path d="M5.500 0v11M0 5.500h11" /></svg>
        </button>
        <span className="ml-[15px] w-8 pt-px text-right">100%</span>
      </div>
    </div>
  );
}

/* ---------- taskbar ---------- */

function AppButton({ label, w, state = "", children }: Kids & { label: string; w: string; state?: string }) {
  return (
    <button aria-label={label} className={"flex h-[50px] shrink-0 items-center justify-center border-b-[3px] " + (state || "border-transparent") + " " + w}>
      {children}
    </button>
  );
}

function Taskbar() {
  return (
    <footer className="flex h-[50px] shrink-0 items-center bg-linear-to-r from-[#d0d7e3] via-[#d6d8db] to-[#cfd6e4] text-black">
      <button aria-label="Start" className="flex w-[60px] shrink-0 justify-center">
        <svg width="20" height="20" viewBox="0 0 20 20"><path d="M0 3l8.500-1.200V9.500H0zM9.500 1.600L20 0v9.500H9.500zM0 10.500h8.500v7.700L0 17zM9.500 10.500H20V20L9.500 18.400z" /></svg>
      </button>
      <label className="flex h-[50px] w-[430px] shrink-0 items-center border border-[#c5c8cc] bg-white pl-[14px] text-[17px]">
        <svg width="21" height="21" viewBox="0 0 21 21" fill="none" stroke="#000" strokeWidth="1.500"><circle cx="13" cy="7.500" r="6.500" /><path d="M8.500 12.500L1 20" /></svg>
        <input aria-label="Search Windows" placeholder="Search" className="ml-[14px] min-w-0 flex-1 bg-transparent outline-none placeholder:text-[#333]" />
      </label>
      <AppButton label="Cortana" w="w-[60px]">
        <svg width="22" height="24" viewBox="0 0 22 24" fill="none" stroke="#000" strokeWidth="2.800"><circle cx="11" cy="13" r="8.500" /></svg>
      </AppButton>
      <AppButton label="Task view" w="w-[60px]">
        <svg width="21" height="21" viewBox="0 0 21 21" fill="none" stroke="#000" strokeWidth="1.400">
          <path d="M1 2v3.500h12V2M1 8h12v7.500H1zM1 21v-2.500h12V21M18.500 2v4M18.500 12v9" /><path d="M18.500 8v3" strokeWidth="3" />
        </svg>
      </AppButton>
      <AppButton label="File Explorer" w="w-[68px]">
        <svg width="28" height="26" viewBox="0 0 28 26">
          <path d="M0 2.500h11l2 2h14.500V24H0z" fill="#ffd04c" /><path d="M0 5V2h11l2 2-2 2H0z" fill="#dd9a05" />
          <path d="M5 25V16c0-1 1-2 2-2h14c1 0 2 1 2 2v9h-4.500v-6h-9v6z" fill="#3a8fdc" />
        </svg>
      </AppButton>
      <AppButton label="Microsoft Store" w="w-[56px]">
        <svg width="30" height="32" viewBox="0 0 30 32">
          <path d="M8 10V3c0-1 .5-1.500 1.500-1.500h11c1 0 1.500.5 1.500 1.500v7" fill="none" stroke="#222" strokeWidth="2.500" />
          <path d="M0 9h30v21c0 1-1 2-2 2H2c-1 0-2-1-2-2z" fill="#2f2f2f" />
          <path d="M9.500 15h5v5h-5z" fill="#f25022" /><path d="M15.500 15h5v5h-5z" fill="#7fba00" />
          <path d="M9.500 21h5v5h-5z" fill="#00a4ef" /><path d="M15.500 21h5v5h-5z" fill="#ffb900" />
        </svg>
      </AppButton>
      <AppButton label="Mail" w="w-[68px]">
        <svg width="30" height="28" viewBox="0 0 30 28">
          <path d="M0 9.500L15 0l15 9.500V12H0z" fill="#0a5ba8" /><path d="M2 10h26L15 20z" fill="#f4f4f4" />
          <path d="M0 9.500L15 19v9H0z" fill="#1a9be8" /><path d="M30 9.500v18.500H4z" fill="#3fc6f7" /><path d="M0 28L15 18l15 10z" fill="#1b8fe0" />
        </svg>
      </AppButton>
      <AppButton label="L" w="w-[56px]">
        <span className="flex size-[30px] items-center justify-center bg-[#27aeda] font-['Liberation_Sans'] text-[26px] font-bold leading-none text-white [text-shadow:-3px_2px_#0b2a55]">L</span>
      </AppButton>
      <AppButton label="Chrome" w="w-[51px] ml-[9px]" state="border-[#0078d7]">
        <svg width="28" height="28" viewBox="0 0 28 28">
          <circle cx="14" cy="14" r="13.500" fill="#f9c730" />
          <path d="M2.300 7.250A13.500 13.500 0 0 1 25.700 7.250L14 7.500 8.400 17.200z" fill="#dc4b3e" />
          <path d="M2.300 7.250A13.500 13.500 0 0 0 13.500 27.500L19.800 17.200 8.300 17.300z" fill="#1a9f5b" />
          <circle cx="14" cy="14" r="6.500" fill="#fff" /><circle cx="14" cy="14" r="5.200" fill="#4585f3" />
        </svg>
      </AppButton>
      <AppButton label="Excel" w="w-[61px] ml-[6px] bg-[#eceef1]" state="border-[#0078d7]">
        <svg width="30" height="28" viewBox="0 0 30 28">
          <path d="M7 0h11v14H7z" fill="#21a366" /><path d="M18 0h11v7H18z" fill="#33c481" /><path d="M18 7h11v7H18z" fill="#21a366" />
          <path d="M7 14h11v7H7z" fill="#185c37" /><path d="M18 14h11v7H18z" fill="#107c41" /><path d="M7 21h22v7H7z" fill="#185c37" />
          <rect y="6" width="15" height="16" rx="1" fill="#107c41" />
          <text x="7.500" y="18.500" fontSize="12.500" fontWeight="700" fill="#fff" textAnchor="middle">X</text>
        </svg>
      </AppButton>
      <AppButton label="Word" w="w-[51px] ml-[6px]" state="border-[#0078d7]">
        <svg width="30" height="28" viewBox="0 0 30 28">
          <path d="M7 0h22v7H7z" fill="#41a5ee" /><path d="M7 7h22v7H7z" fill="#2b7cd3" /><path d="M7 14h22v7H7z" fill="#185abd" /><path d="M7 21h22v7H7z" fill="#103f91" />
          <rect y="6" width="15" height="16" rx="1" fill="#185abd" />
          <text x="7.500" y="18" fontSize="11" fontWeight="700" fill="#fff" textAnchor="middle">W</text>
        </svg>
      </AppButton>
      <div className="flex flex-1 items-center justify-end self-stretch">
        <svg width="16" height="10" viewBox="0 0 16 10" fill="none" stroke="#000" strokeWidth="1.500"><path d="M1 9l7-7.500L15 9" /></svg>
        <svg width="20" height="15" viewBox="0 0 20 15" className="ml-3"><path d="M5 14a4.200 4.200 0 0 1-.5-8.300A6 6 0 0 1 15.500 5a4.500 4.500 0 0 1 0 9z" fill="#8b8b8b" stroke="#111" /><path d="M3 13.500L12 7l7 4c0 2-2 2.700-3 2.700z" fill="#e3e3e3" /></svg>
        <svg width="19" height="12" viewBox="0 0 19 12" className="ml-[11px]"><path d="M1 1h15.500v10H1z" fill="none" stroke="#000" strokeWidth="1.400" /><path d="M3 3h7.500v6H3zM17 4h2v4h-2z" /></svg>
        <svg width="17" height="16" viewBox="0 0 17 16" fill="none" stroke="#111" strokeWidth="1.300" className="ml-3">
          <path d="M1 15C1 7 7 1 15 1M4.500 15C4.500 9 9 4.500 15 4.500M8 15c0-4 3-7 7-7M11 15c0-2 2-3.800 4-3.800" /><circle cx="14" cy="14.200" r="1.200" fill="#111" />
        </svg>
        <svg width="21" height="16" viewBox="0 0 21 16" fill="none" stroke="#111" strokeWidth="1.300" className="ml-3">
          <path d="M1 5.500h3L8 2v12l-4-3.500H1zM11 5.500c1.200 1.500 1.200 3.500 0 5M13.500 3.500c2.500 2.500 2.500 6.500 0 9" /><path d="M16.500 1.500c4 4 4 9 0 13" stroke="#999" />
        </svg>
        <svg width="21" height="16" viewBox="0 0 21 16" className="ml-[9px]"><path d="M5 15.500a4.300 4.300 0 0 1-.5-8.500A6.300 6.300 0 0 1 16 5.500a5 5 0 0 1 0 10z" fill="#f8f8f8" /><path d="M10.500 13V7.500M8 9.500L10.500 7 13 9.500" fill="none" stroke="#c5c8cc" strokeWidth="2" /></svg>
        <span className="ml-3 w-[30px] text-[14px]">ENG</span>
        <div className="ml-3 w-[82px] text-center text-[14px] leading-[23px]">
          <div>7:48 AM</div>
          <div>17/05/2021</div>
        </div>
        <div className="relative ml-[19px] mr-[15px] h-10 w-[31px]">
          <svg width="22" height="22" viewBox="0 0 22 22" className="mt-2"><path d="M0 0h20v17h-5v4l-4-4H0z" /><path d="M4 4.500h12M4 8.500h12M4 12.500h8" stroke="#d5d8dd" strokeWidth="1.300" /></svg>
          <span className="absolute bottom-0 right-0 flex size-5 items-center justify-center rounded-full border border-[#777] bg-[#cfcfd1] text-[13px] font-semibold leading-none">4</span>
        </div>
        <div className="mr-[5px] w-px self-stretch bg-[#a4a8b0]" />
      </div>
    </footer>
  );
}

export default function App() {
  return (
    <div className="flex h-screen flex-col overflow-hidden bg-[#f3f2f1] font-['Open_Sans',sans-serif] text-[#444]">
      <TitleBar />
      <TabRow />
      <Ribbon />
      <FormulaBar />
      <Sheet />
      <SheetTabs />
      <StatusBar />
      <Taskbar />
    </div>
  );
}
